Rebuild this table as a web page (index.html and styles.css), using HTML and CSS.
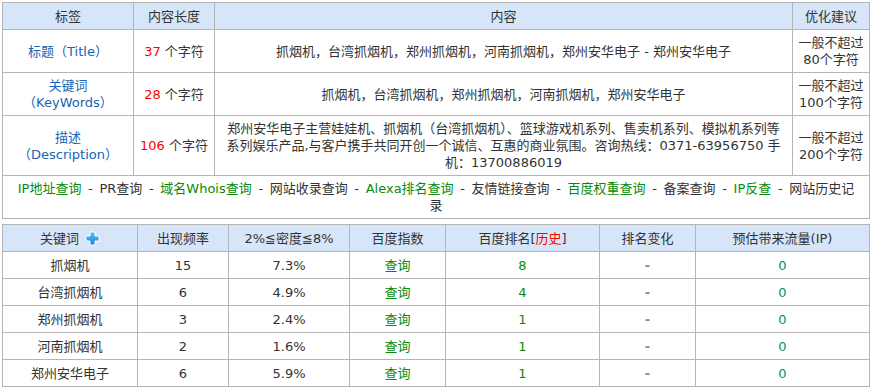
FILE: index.html
```html
<!DOCTYPE html>
<html lang="zh-CN">
  <head>
    <meta charset="UTF-8" />
    <meta name="viewport" content="width=device-width, initial-scale=1.0" />
    <title>SEO 信息</title>
    <link rel="stylesheet" href="styles.css">
  </head>
  <body>
    <table class="infoTabel">
      <colgroup>
        <col class="c1" />
        <col class="c2" />
        <col class="c3" />
        <col class="c4" />
      </colgroup>
      <tr class="hoved">
        <th>标签</th>
        <th>内容长度</th>
        <th>内容</th>
        <th>优化建议</th>
      </tr>
      <tr class="raekke">
        <td class="blaa">标题（Title）</td>
        <td><span class="roed">37</span> 个字符</td>
        <td>抓烟机，台湾抓烟机，郑州抓烟机，河南抓烟机，郑州安华电子 - 郑州安华电子</td>
        <td class="forslag">一般不超过<br />80个字符</td>
      </tr>
      <tr class="raekke">
        <td class="blaa">关键词<br />（KeyWords）</td>
        <td><span class="roed">28</span> 个字符</td>
        <td>抓烟机，台湾抓烟机，郑州抓烟机，河南抓烟机，郑州安华电子</td>
        <td class="forslag">一般不超过<br />100个字符</td>
      </tr>
      <tr class="raekke hoej">
        <td class="blaa">描述<br />（Description）</td>
        <td><span class="roed">106</span> 个字符</td>
        <td class="beskrivelse">郑州安华电子主营娃娃机、抓烟机（台湾抓烟机）、篮球游戏机系列、售卖机系列、模拟机系列等系列娱乐产品,与客户携手共同开创一个诚信、互惠的商业氛围。咨询热线：0371-63956750 手机：13700886019</td>
        <td class="forslag">一般不超过<br />200个字符</td>
      </tr>
      <tr class="raekke">
        <td colspan="4" class="links">
          <span class="groen">IP地址查询</span> <span class="skil">-</span> PR查询 <span class="skil">-</span> <span class="groen">域名Whois查询</span> <span class="skil">-</span> 网站收录查询 <span class="skil">-</span> <span class="groen">Alexa排名查询</span> <span class="skil">-</span> 友情链接查询 <span class="skil">-</span> <span class="groen">百度权重查询</span> <span class="skil">-</span> 备案查询 <span class="skil">-</span> <span class="groen">IP反查</span> <span class="skil">-</span> 网站历史记录
        </td>
      </tr>
    </table>

    <table class="ordTabel">
      <colgroup>
        <col class="k1" />
        <col class="k2" />
        <col class="k3" />
        <col class="k4" />
        <col class="k5" />
        <col class="k6" />
        <col class="k7" />
      </colgroup>
      <tr class="hoved">
        <th>关键词
          <svg class="plus" width="15" height="15" viewBox="0 0 15 15">
            <defs>
              <linearGradient id="plusFarve" x1="0" y1="0" x2="0" y2="1">
                <stop offset="0" stop-color="#5cc0f5" />
                <stop offset="1" stop-color="#1a86d8" />
              </linearGradient>
            </defs>
            <path d="M5 1h5v4h4v5h-4v4H5v-4H1V5h4z" fill="url(#plusFarve)" stroke="#ffffff" stroke-width="1" />
          </svg>
        </th>
        <th>出现频率</th>
        <th>2%≦密度≦8%</th>
        <th>百度指数</th>
        <th>百度排名<span class="klamme">[</span><span class="roed">历史</span><span class="klamme">]</span></th>
        <th>排名变化</th>
        <th>预估带来流量(IP)</th>
      </tr>
      <tr>
        <td>抓烟机</td><td>15</td><td>7.3%</td>
        <td class="groen">查询</td><td class="groen">8</td><td class="graa">-</td><td class="teal">0</td>
      </tr>
      <tr>
        <td>台湾抓烟机</td><td>6</td><td>4.9%</td>
        <td class="groen">查询</td><td class="groen">4</td><td class="graa">-</td><td class="teal">0</td>
      </tr>
      <tr>
        <td>郑州抓烟机</td><td>3</td><td>2.4%</td>
        <td class="groen">查询</td><td class="groen">1</td><td class="graa">-</td><td class="teal">0</td>
      </tr>
      <tr>
        <td>河南抓烟机</td><td>2</td><td>1.6%</td>
        <td class="groen">查询</td><td class="groen">1</td><td class="graa">-</td><td class="teal">0</td>
      </tr>
      <tr>
        <td>郑州安华电子</td><td>6</td><td>5.9%</td>
        <td class="groen">查询</td><td class="groen">1</td><td class="graa">-</td><td class="teal">0</td>
      </tr>
    </table>
  </body>
</html>
```

FILE: styles.css
```css
body {
  margin: 2px;
  padding: 0;
  background: #ffffff;
  color: #333333;
  font-family: "DejaVu Sans", "Noto Sans CJK SC", sans-serif;
  font-size: 13px;
  line-height: 17px;
}

table {
  border-collapse: collapse;
  table-layout: fixed;
  width: 867px;
}

th,
td {
  border: 1px solid #b5b5b5;
  text-align: center;
  vertical-align: middle;
  padding: 4px 4px;
}

th {
  background-color: #d6e6f8;
  font-weight: normal;
  color: #333333;
}

.infoTabel .hoved {
  height: 27px;
}
.infoTabel .raekke {
  height: 43px;
}
.infoTabel .hoej {
  height: 59px;
}

.c1 { width: 131px; }
.c2 { width: 81px; }
.c3 { width: 578px; }
.c4 { width: 77px; }

.blaa {
  color: #1565b5;
}
.roed {
  color: #ff0000;
}
.groen {
  color: #0a8a0a;
}
.teal {
  color: #08925a;
}
.graa {
  color: #888888;
  font-weight: bold;
}
.klamme {
  color: #333333;
}

.beskrivelse {
  padding: 4px 8px;
}

.forslag {
  padding: 4px 2px;
}

.links {
  padding: 4px 10px;
}
.skil {
  margin: 0 2.5px;
}

.ordTabel {
  margin-top: 5px;
}
.ordTabel .hoved {
  height: 27px;
}
.ordTabel tr {
  height: 27px;
}
.ordTabel td {
  padding: 2px 4px;
}

.k1 { width: 135px; }
.k2 { width: 91px; }
.k3 { width: 121px; }
.k4 { width: 96px; }
.k5 { width: 154px; }
.k6 { width: 96px; }
.k7 { width: 174px; }

.plus {
  vertical-align: -3px;
  margin-left: 2px;
}
```
